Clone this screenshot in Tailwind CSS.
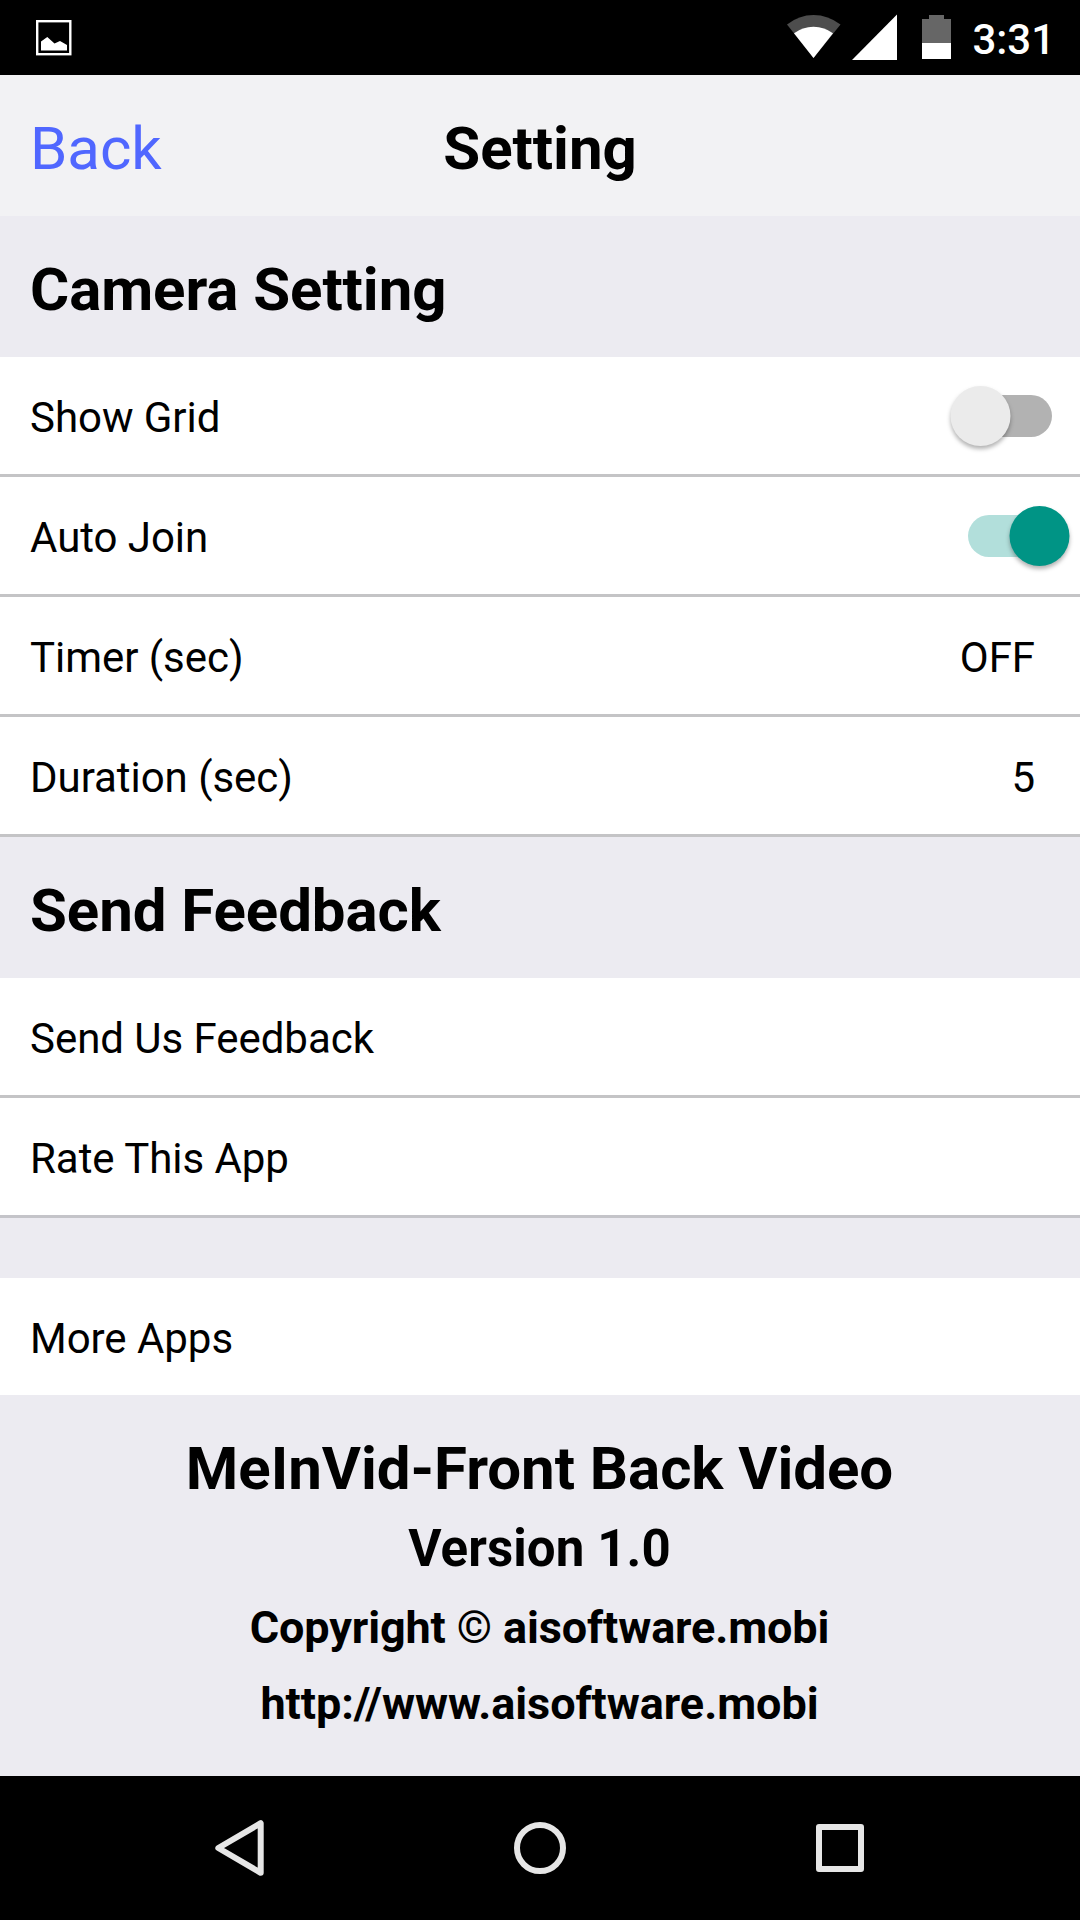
<!DOCTYPE html>
<html lang="en">
<head>
    <meta charset="UTF-8">
    <meta name="viewport" content="width=device-width, initial-scale=1.0">
    <title>Setting</title>
    <script src="https://cdn.jsdelivr.net/npm/@tailwindcss/browser@4"></script>
</head>
<body class="w-[1080px] h-[1920px] flex flex-col overflow-hidden bg-[#ecebf1] font-['Roboto',sans-serif] text-black text-[42px] leading-none tracking-[-0.04px]">
    <!-- Status bar -->
    <div class="h-[75px] shrink-0 bg-black text-white flex items-center justify-between pl-9 pr-[25px]">
        <svg class="w-9 h-[75px]" viewBox="36 0 36 75">
            <rect x="37.2" y="21.2" width="33.1" height="33" fill="none" stroke="#fff" stroke-width="2.4"/>
            <path d="M41 50.5V41.5L47.3 37L54.5 43.5L60 41L67 45V50.5Z" fill="#fff"/>
        </svg>
        <div class="flex items-center">
            <svg class="w-[164px] h-[75px] mr-[21px]" viewBox="788 0 164 75">
                <path d="M814.5 58L788 24.5Q800 15 814.5 15T841.5 24.5Z" fill="#4d4d4d"/>
                <path d="M814.5 58L795 33.3Q803.5 26.7 814.5 26.7T834 33.3Z" fill="#fff"/>
                <path d="M853 60L898 14.5V60Z" fill="#fff"/>
                <path d="M923 43V19H930V15H945V19H952V43Z" fill="#666"/>
                <path d="M923 43H952V59H923Z" fill="#fff"/>
            </svg>
            <span class="font-medium pt-1">3:31</span>
        </div>
    </div>

    <!-- Header -->
    <header class="h-[141px] shrink-0 bg-[#f2f2f4] grid grid-cols-3 items-center px-[30px] pt-1.5 text-[60px]">
        <a class="text-[#5067ff]">Back</a>
        <h1 class="text-center font-bold">Setting</h1>
    </header>

    <!-- Camera settings -->
    <h2 class="h-[141px] shrink-0 flex items-center px-[30px] pt-1.5 text-[60px] font-bold tracking-[-0.08px]">Camera Setting</h2>
    <div class="shrink-0 bg-white">
        <div class="h-[120px] flex items-center justify-between pl-[30px] pr-2.5 border-b-3 border-[#c4c4c6]">
            <span class="pt-1">Show Grid</span>
            <svg class="w-[120px] h-[60px] overflow-visible" viewBox="0 0 120 60">
                <rect x="18" y="9" width="84" height="42" rx="21" fill="#b2b2b2"/>
                <circle class="drop-shadow-[0_3px_2px_rgba(0,0,0,0.3)]" cx="30.5" cy="30" r="30" fill="#ebebeb"/>
            </svg>
        </div>
        <div class="h-[120px] flex items-center justify-between pl-[30px] pr-2.5 border-b-3 border-[#c4c4c6]">
            <span class="pt-1">Auto Join</span>
            <svg class="w-[120px] h-[60px] overflow-visible" viewBox="0 0 120 60">
                <rect x="18" y="9" width="84" height="42" rx="21" fill="#b2dfdb"/>
                <circle class="drop-shadow-[0_3px_2px_rgba(0,0,0,0.3)]" cx="89.5" cy="30" r="30" fill="#009485"/>
            </svg>
        </div>
        <div class="h-[120px] flex items-center justify-between pl-[30px] pr-[45px] pt-1 border-b-3 border-[#c4c4c6]">
            <span>Timer (sec)</span>
            <span>OFF</span>
        </div>
        <div class="h-[120px] flex items-center justify-between pl-[30px] pr-[45px] pt-1 border-b-3 border-[#c4c4c6]">
            <span>Duration (sec)</span>
            <span>5</span>
        </div>
    </div>

    <!-- Feedback -->
    <h2 class="h-[141px] shrink-0 flex items-center px-[30px] pt-1.5 text-[60px] font-bold tracking-[-0.08px]">Send Feedback</h2>
    <div class="shrink-0 bg-white">
        <div class="h-[120px] flex items-center px-[30px] pt-1 border-b-3 border-[#c4c4c6]">Send Us Feedback</div>
        <div class="h-[120px] flex items-center px-[30px] pt-1 border-b-3 border-[#c4c4c9]">Rate This App</div>
    </div>
    <div class="h-[117px] shrink-0 mt-[60px] bg-white flex items-center px-[30px] pt-1">More Apps</div>

    <!-- About -->
    <footer class="flex-1 flex flex-col items-center pt-[39px] pr-px font-bold">
        <p class="text-[60px] leading-[70px]">MeInVid-Front Back Video</p>
        <p class="text-[51px] leading-[60px] mt-[15px] tracking-[0.1px]">Version 1.0</p>
        <p class="text-[45px] leading-[53px] mt-[22px] tracking-[-0.12px]">Copyright © aisoftware.mobi</p>
        <p class="text-[45px] leading-[53px] mt-[23px]">http://www.aisoftware.mobi</p>
    </footer>

    <!-- Navigation bar -->
    <nav class="h-36 shrink-0 bg-black">
        <svg class="w-full h-full" viewBox="0 1776 1080 144" fill="none" stroke="#e6e6e6" stroke-width="6" stroke-linejoin="round">
            <path d="M218.3 1848L260.7 1823.2V1872.8Z"/>
            <circle cx="540" cy="1848" r="23"/>
            <rect x="819" y="1827" width="42" height="42"/>
        </svg>
    </nav>
</body>
</html>
